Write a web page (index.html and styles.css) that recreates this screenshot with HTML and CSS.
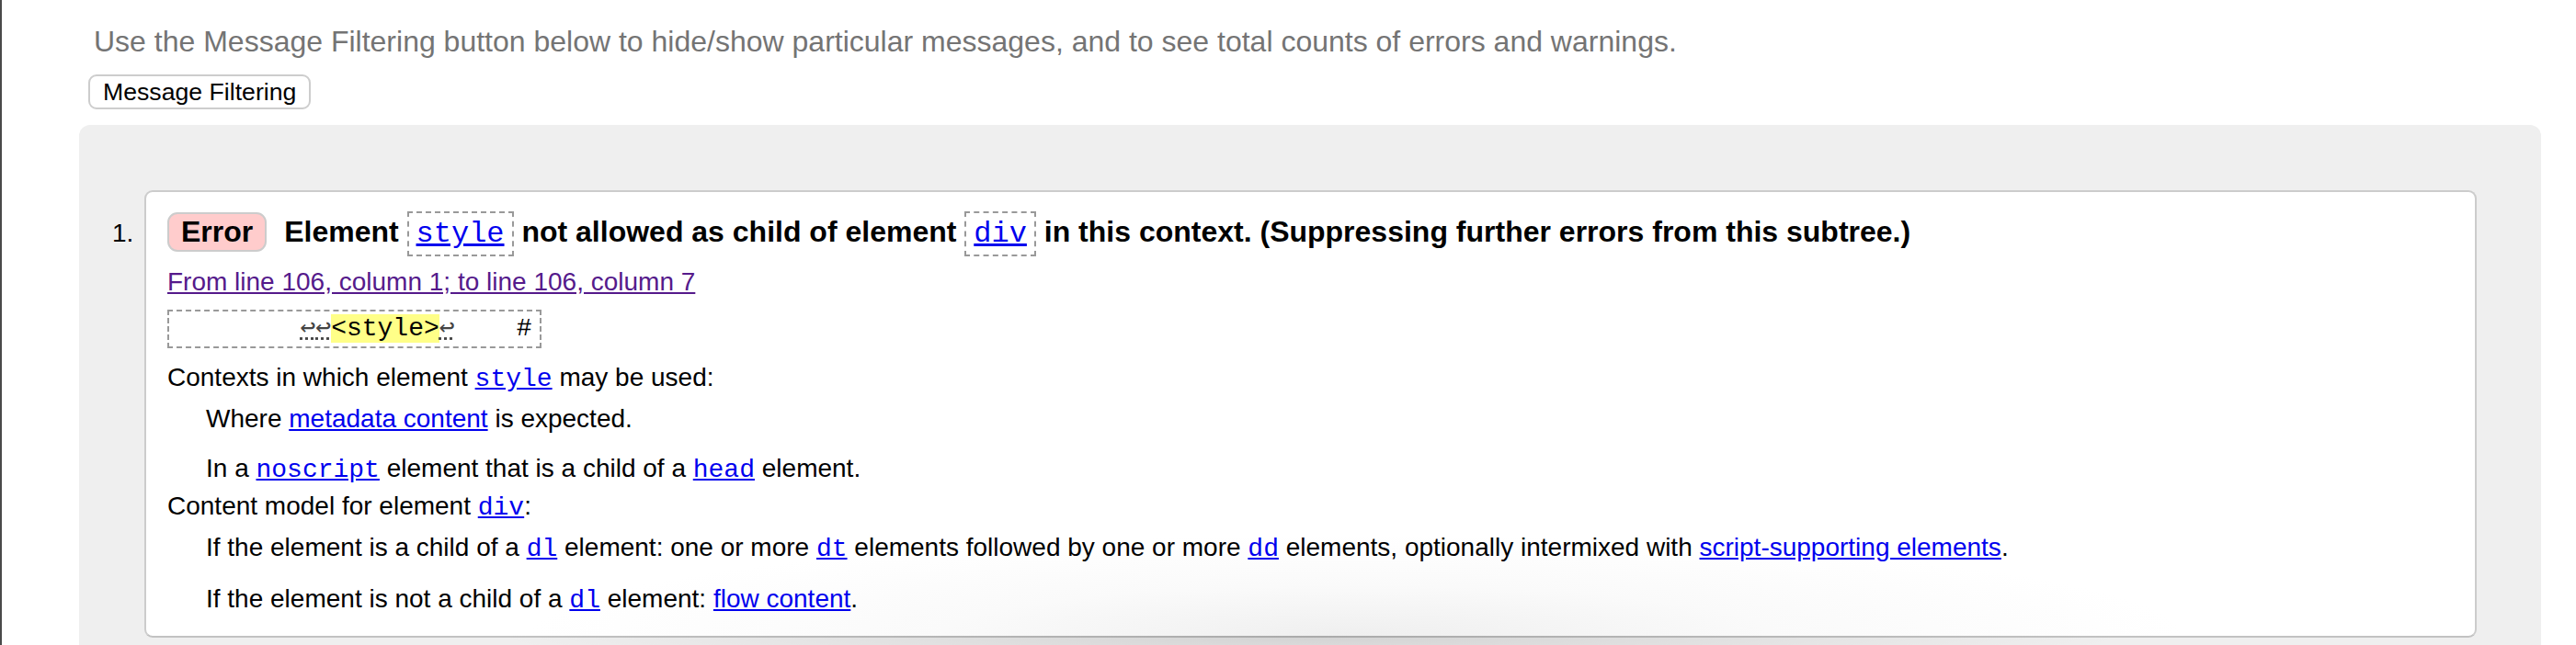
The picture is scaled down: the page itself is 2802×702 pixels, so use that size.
FILE: index.html
```html
<!DOCTYPE html>
<html lang="en">
<head>
<meta charset="utf-8">
<title>Nu Html Checker</title>
<link rel="stylesheet" href="styles.css">
</head>
<body>
<div class="page">
  <p class="intro">Use the Message Filtering button below to hide/show particular messages, and to see total counts of errors and warnings.</p>
  <button class="filter-btn" type="button">Message Filtering</button>
  <div class="results">
    <ol class="messages">
      <li class="item">
        <span class="num">1.</span>
        <div class="card">
          <p class="message"><strong class="badge">Error</strong> <span class="msg-text">Element <code class="boxed"><a href="#">style</a></code> not allowed as child of element <code class="boxed"><a href="#">div</a></code> in this context. (Suppressing further errors from this subtree.)</span></p>
          <p class="location"><a class="visited" href="#">From line 106, column 1; to line 106, column 7</a></p>
          <p class="extract"><code>        <span class="lf">↩</span><span class="lf">↩</span><b>&lt;style&gt;</b><span class="lf">↩</span>    #</code></p>
          <dl class="details">
            <dt>Contexts in which element <a href="#"><code>style</code></a> may be used:</dt>
            <dd>Where <a href="#">metadata content</a> is expected.</dd>
            <dd>In a <a href="#"><code>noscript</code></a> element that is a child of a <a href="#"><code>head</code></a> element.</dd>
            <dt>Content model for element <a href="#"><code>div</code></a>:</dt>
            <dd>If the element is a child of a <a href="#"><code>dl</code></a> element: one or more <a href="#"><code>dt</code></a> elements followed by one or more <a href="#"><code>dd</code></a> elements, optionally intermixed with <a href="#">script-supporting elements</a>.</dd>
            <dd>If the element is not a child of a <a href="#"><code>dl</code></a> element: <a href="#">flow content</a>.</dd>
          </dl>
        </div>
      </li>
    </ol>
  </div>
</div>
</body>
</html>
```

FILE: styles.css
```css
html, body {
  margin: 0;
  padding: 0;
  background: #fff;
}

.page {
  border-left: 2px solid #4a4a4a;
  min-height: 100vh;
  box-sizing: border-box;
  font-family: "Liberation Sans", Arial, Helvetica, sans-serif;
  font-size: 28px;
  color: #000;
}

.intro {
  margin: 0;
  padding: 27px 0 0 100px;
  font-size: 32px;
  line-height: 37px;
  color: #747474;
}

.filter-btn {
  display: block;
  margin: 17px 0 0 94px;
  height: 38px;
  padding: 0 14px;
  font-family: "Liberation Sans", Arial, Helvetica, sans-serif;
  font-size: 26.67px;
  color: #000;
  background: #fff;
  border: 2px solid #cdcdcd;
  border-radius: 9px;
}

.results {
  margin: 17px 38px 0 84px;
  padding: 71px 70px 0 36px;
  background: #efefef;
  border-radius: 12px 12px 0 0;
  height: 600px;
  box-sizing: border-box;
}

.messages {
  list-style: none;
  margin: 0;
  padding: 0;
}

.item {
  display: flex;
  align-items: baseline;
}

.num {
  flex: 0 0 35px;
  font-size: 28px;
}

.card {
  position: relative;
  flex: 1 1 auto;
  background: radial-gradient(900px 110px at 52% 100%, #efefef 0%, #fafafa 50%, #fff 100%);
  border: 2px solid #cccccc;
  border-bottom-color: #c2c2c2;
  border-radius: 9px;
  padding: 20px 23px 19px 23px;
}

.card::after {
  content: "";
  position: absolute;
  left: 15%;
  right: 15%;
  top: 100%;
  height: 40px;
  background: radial-gradient(ellipse 50% 100% at 50% 0%, rgba(0, 0, 0, 0.12) 0%, rgba(0, 0, 0, 0) 100%);
  pointer-events: none;
}

a {
  color: #0000ee;
  text-decoration: underline;
}

a.visited {
  color: #551a8b;
}

code {
  font-family: "Liberation Mono", "Courier New", "DejaVu Sans Mono", monospace;
  font-size: 28px;
}

.message {
  margin: 0;
  font-size: 32px;
  line-height: 46px;
  font-weight: bold;
}

.badge {
  display: inline-block;
  line-height: 39px;
  padding: 0 13px;
  background: #ffcccc;
  border: 2px solid #cccccc;
  border-radius: 11px;
  margin-right: 10px;
}

.boxed {
  font-weight: normal;
  font-size: 32px;
  border: 2px dashed #999;
  padding: 4px 8px;
}

.location {
  margin: 9px 0 0;
  line-height: 40px;
}

.extract {
  margin: 10px 0 0;
  line-height: 38px;
}

.extract code {
  display: block;
  width: fit-content;
  white-space: pre;
  border: 2px dashed #999;
  padding: 0 8px;
}

.extract b {
  font-weight: normal;
  background: #ffff88;
}

.lf {
  color: #444;
  text-decoration: underline dotted #444;
}

.details {
  margin: 12px 0 0;
  line-height: 39px;
}

.details dt {
  margin: 0;
}

.details dd {
  margin: 4px 0 0 42px;
}

.details dd + dd {
  margin-top: 15px;
}
```
